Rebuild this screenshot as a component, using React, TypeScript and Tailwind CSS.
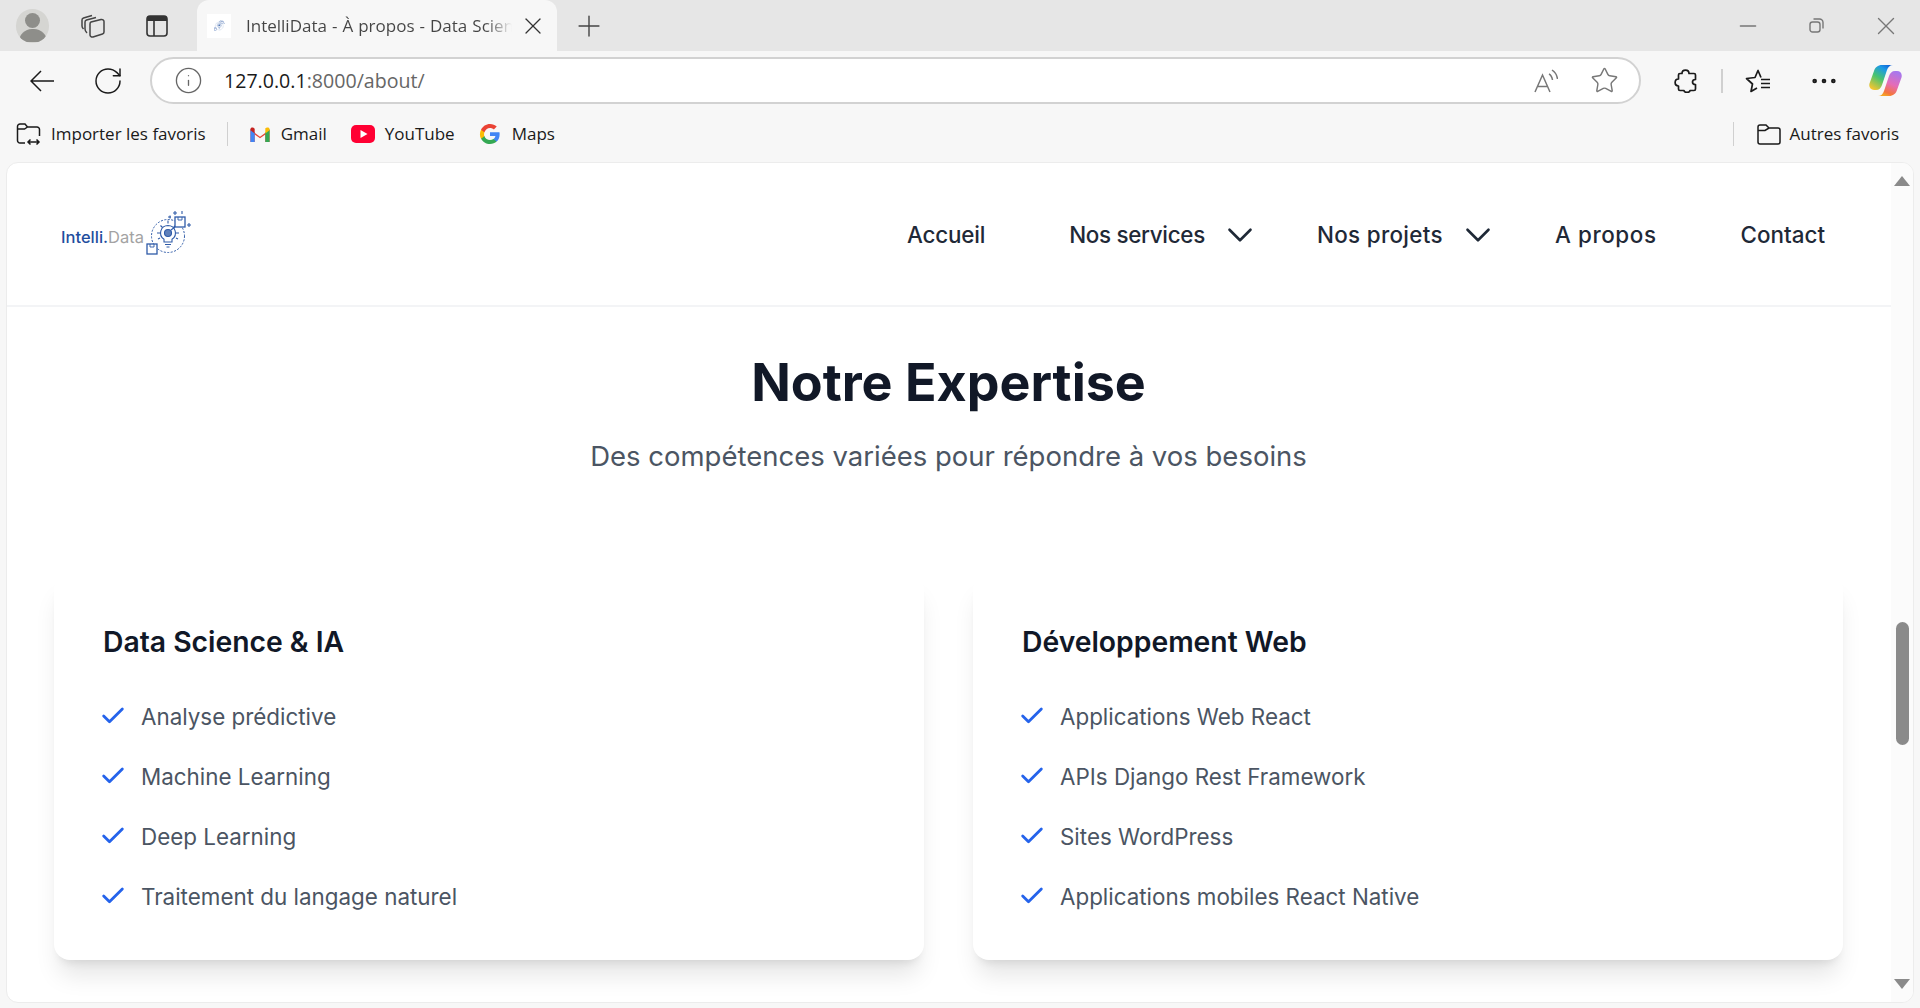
import { Check, ChevronDown, Ellipsis, Info, Minus, Plus, RotateCw, Star, X } from 'lucide-react';

const UI_FONT = "font-['Open_Sans','Noto_Sans',sans-serif]";

const EXPERTISE = [
  {
    title: 'Data Science & IA',
    items: ['Analyse prédictive', 'Machine Learning', 'Deep Learning', 'Traitement du langage naturel'],
  },
  {
    title: 'Développement Web',
    items: ['Applications Web React', 'APIs Django Rest Framework', 'Sites WordPress', 'Applications mobiles React Native'],
  },
];

// bulb in a dashed ring with two small boxes and some sparkles
function LogoMark({ size = 46 }: { size?: number }) {
  return (
    <svg width={size} height={size} viewBox="0 0 46 46" fill="none" stroke="#2f5ba8" strokeWidth="1.100">
      <circle cx="22" cy="25" r="16.500" strokeDasharray="2 1.500" strokeWidth="1" />
      <path d="M22 14.500a7.500 7.500 0 0 0-4 13.800v2.700h8v-2.700a7.500 7.500 0 0 0-4-13.800z" fill="#fff" />
      <circle cx="22" cy="22" r="3.500" fill="#5f80ba" />
      <path d="M19 33.500h6M20.500 36h3M11 22h3M30 22h3M14.500 14.500l2 2M29.500 14.500l-2 2M22 9.500v3M12 28l2-1M32 28l-2-1M25 19l4-3" />
      <rect x="1" y="33" width="10" height="10" fill="#fff" strokeWidth="1.300" />
      <path d="M4 33v3h4v-3" strokeWidth="0.900" />
      <rect x="29" y="6" width="10" height="10" fill="#fff" strokeWidth="1.300" />
      <path d="M32 6v3h4V6" strokeWidth="0.900" />
      <path d="M29 0v4M27 2h4M36 0v3M43 12v4M41 14h4M22 6h3M24 4.500v3" />
    </svg>
  );
}

function GmailIcon() {
  return (
    <svg width="22" height="17" viewBox="0 0 20 16">
      <path d="M1 3.500 10 10l9-6.500V15h-4V8l-5 3.600L5 8v7H1z" fill="#ea4335" />
      <path d="M1 3v12h4V6z" fill="#4285f4" />
      <path d="M19 3v12h-4V6z" fill="#34a853" />
      <path d="M15 2v5l4-3V3c0-1.500-1.500-2-2.500-1.500z" fill="#fbbc04" />
      <path d="M1 3c0-1.500 1.500-2 2.500-1.500L5 2.500V7L1 4z" fill="#c5221f" />
    </svg>
  );
}

function YoutubeIcon() {
  return (
    <svg width="24" height="18" viewBox="0 0 24 18">
      <rect x="0" y="0" width="24" height="18" rx="5" fill="#ff0033" />
      <path d="M9.500 5v8l7-4z" fill="#fff" />
    </svg>
  );
}

function GoogleIcon() {
  return (
    <svg width="22" height="22" viewBox="0 0 48 48">
      <path fill="#4285f4" d="M45 24.500c0-1.600-.1-3.100-.4-4.500H24v8.500h11.800c-.5 2.700-2 5-4.400 6.600v5.500h7.100C42.700 36.700 45 31.100 45 24.500z" />
      <path fill="#34a853" d="M24 46c5.900 0 10.900-2 14.500-5.400l-7.100-5.500c-2 1.300-4.500 2.100-7.400 2.100-5.700 0-10.500-3.800-12.300-9H4.400v5.700C8 41.100 15.400 46 24 46z" />
      <path fill="#fbbc04" d="M11.700 28.700c-.4-1.300-.7-2.800-.7-4.200s.3-2.900.7-4.200v-5.700H4.400C2.900 17.500 2 20.900 2 24.500s.9 7 2.400 9.900z" />
      <path fill="#ea4335" d="M24 10.700c3.200 0 6.100 1.100 8.400 3.300l6.300-6.300C34.900 4.200 29.900 2 24 2 15.400 2 8 6.900 4.400 14.600l7.300 5.700c1.800-5.400 6.600-9.600 12.300-9.600z" />
    </svg>
  );
}

function CopilotIcon() {
  return (
    <svg width="33" height="31" viewBox="0 0 33 31">
      <defs>
        <linearGradient id="copA" x1="0.200" y1="1" x2="0.800" y2="0">
          <stop offset="0" stopColor="#f7c52f" />
          <stop offset="0.450" stopColor="#49c46e" />
          <stop offset="0.800" stopColor="#1c9ae6" />
          <stop offset="1" stopColor="#1266d8" />
        </linearGradient>
        <linearGradient id="copB" x1="0.700" y1="0" x2="0.300" y2="1">
          <stop offset="0" stopColor="#a678ee" />
          <stop offset="0.500" stopColor="#e56cb8" />
          <stop offset="0.850" stopColor="#f4743f" />
          <stop offset="1" stopColor="#f5a623" />
        </linearGradient>
      </defs>
      <path d="M13 0h11c-3 0-5 2-6 5l-5 15c-1 3-3 5-6 5H5c-3.500 0-5.500-3-4.500-6.500L5 6c1-3.500 4-6 8-6z" fill="url(#copA)" />
      <path d="M20 31H9c3 0 5-2 6-5l5-15c1-3 3-5 6-5h2c3.500 0 5.500 3 4.500 6.500L28 25c-1 3.500-4 6-8 6z" fill="url(#copB)" />
    </svg>
  );
}

function ImportIcon() {
  return (
    <svg width="26" height="24" viewBox="0 0 26 24" fill="none" stroke="#1a1a1a" strokeWidth="1.500">
      <path d="M9 21H4a2.500 2.500 0 0 1-2.500-2.500v-14A2.500 2.500 0 0 1 4 2h5l2.500 3H21A2.500 2.500 0 0 1 23.500 7.500V14M1.500 7h7l3-2" />
      <path d="M12 20h11M14.500 17.500 12 20l2.500 2.500M20.500 17.500 23 20l-2.500 2.500" />
    </svg>
  );
}

function FolderIcon() {
  return (
    <svg width="24" height="21" viewBox="0 0 24 21" fill="none" stroke="#1a1a1a" strokeWidth="1.500">
      <path d="M3 1h6l3 3h9a2 2 0 0 1 2 2v12a2 2 0 0 1-2 2H3a2 2 0 0 1-2-2V3a2 2 0 0 1 2-2zM1 6.500h7l4-2.500" />
    </svg>
  );
}

function ExtensionIcon() {
  return (
    <svg width="24" height="24" viewBox="0 0 24 24" fill="none" stroke="#1a1a1a" strokeWidth="1.700" strokeLinejoin="round">
      <path d="M8 4.500c0-4.500 7-4.500 7 0h5c1 0 1.500.5 1.500 1.500v4.500c-2 0-3 1-3 2.500s1 2.500 3 2.500V20c0 1-.5 1.500-1.500 1.500h-4c0 2.500-6 2.500-6 0H6c-1 0-1.500-.5-1.500-1.500v-3c-4.500 0-4.500-7 0-7V6c0-1 .5-1.500 1.500-1.500z" />
    </svg>
  );
}

function FavoritesIcon() {
  return (
    <svg width="26" height="24" viewBox="0 0 26 24" fill="none" stroke="#1a1a1a" strokeWidth="1.700" strokeLinejoin="round">
      <path d="M16 8.500 13 1.500 10 8.500l-8.500 1 6 5.500L6 22.500l6-3.500" />
      <path d="M16 10.500h9M16 14.500h9M16 18.500h9" />
    </svg>
  );
}

function ReadAloudIcon() {
  return (
    <svg width="24" height="24" viewBox="0 0 24 24" fill="none" stroke="#777" strokeWidth="1.500">
      <path d="M1 23 8.500 6 16 23M3.500 17.500h10M15 5c2 1 3 3 3.500 6M18 1c3 2 5 5 5.500 9" />
    </svg>
  );
}

function CollectionsIcon() {
  return (
    <svg width="24" height="24" viewBox="0 0 24 24" fill="none" stroke="#444" strokeWidth="1.500" strokeLinejoin="round">
      <path d="M10 8 20 5.500c1.500-.4 3 .5 3 2V18c0 1-.5 1.700-1.500 2L12 23c-1.500.4-3-.5-3-2V10c0-1 .3-1.700 1-2z" />
      <path d="M6 19c-1.500-1.500-2-3-2-4V8c0-1 .5-1.700 1.500-2L15 3.500" />
      <path d="M2.500 15C1.500 14 1 13 1 12V6c0-1 .5-1.700 1.500-2L11 1.500" />
    </svg>
  );
}

function TabsPanelIcon() {
  return (
    <svg width="22" height="22" viewBox="0 0 22 22">
      <rect x="1" y="1" width="20" height="20" rx="3" fill="none" stroke="#333" strokeWidth="1.600" />
      <path d="M1 6V4a3 3 0 0 1 3-3h14a3 3 0 0 1 3 3v2z" fill="#333" />
      <path d="M8 6v15" stroke="#333" strokeWidth="1.600" />
    </svg>
  );
}

function RestoreIcon() {
  return (
    <svg width="15" height="15" viewBox="0 0 15 15" fill="none" stroke="#777" strokeWidth="1.400">
      <rect x="1" y="4" width="10" height="10" rx="2.500" />
      <path d="M4.500 1h6A3.500 3.500 0 0 1 14 4.500v6" />
    </svg>
  );
}

function BackIcon() {
  return (
    <svg width="24" height="22" viewBox="0 0 24 22" fill="none" stroke="#1a1a1a" strokeWidth="1.500">
      <path d="M1 11h23M11 1 1 11l10 10" />
    </svg>
  );
}

function ChromeBar() {
  return (
    <div className={`shrink-0 ${UI_FONT}`}>
      {/* tab strip */}
      <div className="flex h-[51px] items-center bg-[#e6e6e6] text-[#3b3b3b]">
        <div className="ml-[16px] flex h-[34px] w-[33px] items-center justify-center overflow-hidden rounded-full bg-[#d5d5d2]">
          <div className="flex flex-col items-center">
            <div className="mt-[3px] h-[15px] w-[15px] rounded-full bg-[#8e8e8a]" />
            <div className="mt-[1px] h-[13px] w-[28px] rounded-t-full bg-[#8e8e8a]" />
          </div>
        </div>
        <div className="ml-[32px]"><CollectionsIcon /></div>
        <div className="ml-[41px]"><TabsPanelIcon /></div>
        <div className="ml-[29px] flex h-[51px] w-[360px] items-center rounded-t-xl bg-[#f7f7f7] pl-[10px]">
          <div className="flex h-[24px] w-[24px] items-center justify-center bg-white">
            <LogoMark size={11} />
          </div>
          <span className="ml-[15px] w-[266px] overflow-hidden whitespace-nowrap bg-linear-to-r from-[#444444] from-90% to-transparent bg-clip-text text-[17px] text-transparent [word-spacing:0.600px]">
            IntelliData - À propos - Data Scien
          </span>
          <X size={28} strokeWidth={1.100} className="ml-[7px] text-[#333]" />
        </div>
        <Plus size={34} strokeWidth={1} className="ml-[15px] text-[#444]" />
        <div className="ml-auto flex items-center text-[#777]">
          <Minus size={26} strokeWidth={1.300} />
          <div className="ml-[48px]"><RestoreIcon /></div>
          <X size={30} strokeWidth={1.100} className="ml-[47px] mr-[19px]" />
        </div>
      </div>

      {/* address bar */}
      <div className="flex h-[56px] items-center bg-[#f7f7f7] pt-[3px] text-[#1a1a1a]">
        <div className="ml-[30px]"><BackIcon /></div>
        <RotateCw size={32} strokeWidth={1.100} className="ml-[38px]" />
        <div className="ml-[26px] flex h-[47px] w-[1491px] items-center rounded-full border-2 border-[#d2d2d2] bg-white pr-[20px]">
          <Info size={29} strokeWidth={1.100} className="ml-[22px] text-[#666]" />
          <span className="ml-[21px] text-[19.600px]">
            127.0.0.1<span className="text-[#666]">:8000/about/</span>
          </span>
          <div className="ml-auto"><ReadAloudIcon /></div>
          <Star size={29} strokeWidth={1.200} className="ml-[32px] text-[#777]" />
        </div>
        <div className="ml-[33px]"><ExtensionIcon /></div>
        <div className="ml-[23px] h-[24px] w-[2px] bg-[#d0d0d0]" />
        <div className="ml-[22px]"><FavoritesIcon /></div>
        <Ellipsis size={32} strokeWidth={1.500} className="ml-[37px]" />
        <div className="ml-[29px]"><CopilotIcon /></div>
      </div>

      {/* bookmarks */}
      <div className="flex h-[55px] items-center bg-[#f7f7f7] pb-[1px] text-[17px] text-[#1a1a1a]">
        <div className="ml-[16px]"><ImportIcon /></div>
        <span className="ml-[9px]">Importer les favoris</span>
        <div className="ml-[21px] h-[24px] w-[1px] bg-[#d0d0d0]" />
        <div className="ml-[21px]"><GmailIcon /></div>
        <span className="ml-[10px]">Gmail</span>
        <div className="ml-[24px]"><YoutubeIcon /></div>
        <span className="ml-[10px]">YouTube</span>
        <div className="ml-[24px]"><GoogleIcon /></div>
        <span className="ml-[11px]">Maps</span>
        <div className="ml-auto h-[24px] w-[1px] bg-[#d0d0d0]" />
        <div className="ml-[23px]"><FolderIcon /></div>
        <span className="ml-[9px] mr-[21px]">Autres favoris</span>
      </div>
    </div>
  );
}

function Scrollbar() {
  return (
    <div className="flex w-[22px] shrink-0 flex-col items-center bg-[#fbfbfb] pb-[13px] pt-[13px]">
      <div className="h-0 w-0 border-x-[8px] border-b-[10px] border-x-transparent border-b-[#8a8a8a]" />
      <div className="mt-[436px] h-[123px] w-[13px] rounded-full bg-[#8a8a8a]" />
      <div className="mt-auto h-0 w-0 border-x-[8px] border-t-[10px] border-x-transparent border-t-[#8a8a8a]" />
    </div>
  );
}

function Header() {
  return (
    <header className="flex h-[144px] shrink-0 items-center border-b-2 border-[#f3f4f6] pl-[54px] pr-[66px]">
      <div className="mt-[3px] flex items-center">
        <span className="mt-[3px] text-[16.500px] font-medium text-[#1f4e9e]">
          Intelli.<span className="font-normal text-[#a3a3a3]">Data</span>
        </span>
        <div className="-mt-[3px] ml-[2px]"><LogoMark /></div>
      </div>
      <nav className="ml-auto mt-[2px] flex items-center gap-[84px] text-[22.400px] font-medium text-[#1f2937]">
        <span className="tracking-[-0.2px]">Accueil</span>
        <span className="flex items-center tracking-[-0.3px]">
          Nos services
          <ChevronDown size={42} strokeWidth={1.500} className="-mr-[28px] ml-[14px]" />
        </span>
        <span className="flex items-center tracking-[0.33px]">
          Nos projets
          <ChevronDown size={42} strokeWidth={1.500} className="-mr-[28px] ml-[14px]" />
        </span>
        <span className="tracking-[0.6px]">A propos</span>
        <span>Contact</span>
      </nav>
    </header>
  );
}

export default function App() {
  return (
    <div className="flex h-screen flex-col overflow-hidden bg-[#f7f7f7]">
      <ChromeBar />
      <div className="mb-[5px] ml-[6px] mr-[6px] flex min-h-0 flex-1 overflow-hidden rounded-xl border border-[#ececec] bg-white font-['Inter',sans-serif]">
        <div className="flex min-w-0 flex-1 flex-col">
          <Header />
          <section className="flex-1 pl-[47px] pr-[48px]">
            <h1 className="mt-[46px] text-center text-[52px] font-bold leading-[60px] text-[#111827]">Notre Expertise</h1>
            <p className="mt-[21px] text-center text-[27.500px] leading-[44px] text-[#4b5563]">
              Des compétences variées pour répondre à vos besoins
            </p>
            <div className="mt-[96px] grid grid-cols-2 gap-[49px]">
              {EXPERTISE.map(card => (
                <div key={card.title} className="h-[386px] rounded-2xl bg-white px-[48px] pt-[50px] shadow-xl">
                  <h3 className="ml-[1px] text-[28.300px] font-semibold leading-[36px] text-[#111827]">{card.title}</h3>
                  <ul className="mt-[39px] flex flex-col gap-[24px]">
                    {card.items.map(item => (
                      <li key={item} className="flex h-[36px] items-center text-[22.400px] text-[#4b5563]">
                        <Check size={28} strokeWidth={2.400} className="-mt-[2px] -ml-[3px] mr-[14px] text-[#2563eb]" />
                        {item}
                      </li>
                    ))}
                  </ul>
                </div>
              ))}
            </div>
          </section>
        </div>
        <Scrollbar />
      </div>
    </div>
  );
}
